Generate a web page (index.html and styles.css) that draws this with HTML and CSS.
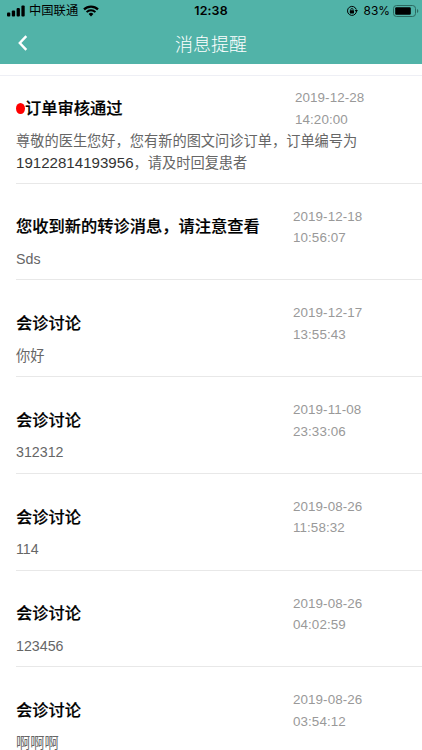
FILE: index.html
```
<!DOCTYPE html>
<html lang="zh-CN">
<head>
    <meta charset="UTF-8">
    <meta name="viewport" content="width=device-width, initial-scale=1.0">
    <title>消息提醒</title>
    <link rel="stylesheet" href="styles.css">
</head>
<body>

    <div class="header">
        <!-- 状态栏 -->
        <div class="status-bar">
            <div class="status-left">
                <svg class="signal" width="18" height="12" viewBox="0 0 18 12">
                    <rect x="0" y="7.5" width="3.3" height="4" rx="1"/>
                    <rect x="4.8" y="5.5" width="3.3" height="6" rx="1"/>
                    <rect x="9.6" y="3" width="3.3" height="8.5" rx="1"/>
                    <rect x="14.4" y="0.5" width="3.3" height="11" rx="1"/>
                </svg>
                <span class="carrier">中国联通</span>
                <svg class="wifi" width="16" height="12" viewBox="0 0 16 12">
                    <path d="M1 4.4a10 10 0 0 1 14 0" fill="none" stroke="#000" stroke-width="2.2"/>
                    <path d="M3.6 7.1a6.2 6.2 0 0 1 8.8 0" fill="none" stroke="#000" stroke-width="2"/>
                    <path d="M8 11.4L5.6 9a3.4 3.4 0 0 1 4.8 0z"/>
                </svg>
            </div>
            <div class="status-time">12:38</div>
            <div class="status-right">
                <svg class="lock" width="12" height="12" viewBox="0 0 12 12">
                    <path d="M10.3 7.2a4.5 4.5 0 1 1 0-2.6" fill="none" stroke="#000" stroke-width="1"/>
                    <path d="M8.7 5h3.2L10.4 7.4z"/>
                    <rect x="3.8" y="5.3" width="4.2" height="3.2" rx="0.4"/>
                    <path d="M4.7 5.5V4.7a1.2 1.2 0 0 1 2.4 0v.8" fill="none" stroke="#000" stroke-width="0.8"/>
                </svg>
                <span class="percent">83%</span>
                <svg class="battery" width="26" height="12" viewBox="0 0 26 12">
                    <rect x="0.5" y="0.5" width="22" height="11" rx="3" fill="none" stroke="#2b6960" stroke-width="1"/>
                    <rect x="2.2" y="2.2" width="15.6" height="7.6" rx="1.2"/>
                    <path d="M24 4v4q1.3-.6 1.3-2T24 4z" fill="#2b6960"/>
                </svg>
            </div>
        </div>

        <!-- 导航栏 -->
        <div class="nav-bar">
            <svg class="back" width="10" height="16" viewBox="0 0 10 16">
                <path d="M8.3 1.2L1.8 8l6.5 6.8" fill="none" stroke="#fff" stroke-width="2.4"/>
            </svg>
            <div class="nav-title">消息提醒</div>
        </div>
    </div>

    <!-- 消息列表 -->
    <div class="list">
        <div class="item unread">
            <div class="item-head">
                <div class="title"><span class="dot"></span>订单审核通过</div>
                <div class="date">2019-12-28<br>14:20:00</div>
            </div>
            <div class="desc">尊敬的医生您好，您有新的图文问诊订单，订单编号为<br><span class="order">19122814193956</span>，请及时回复患者</div>
        </div>
        <div class="item">
            <div class="item-head">
                <div class="title">您收到新的转诊消息，请注意查看</div>
                <div class="date">2019-12-18<br>10:56:07</div>
            </div>
            <div class="desc">Sds</div>
        </div>
        <div class="item">
            <div class="item-head">
                <div class="title">会诊讨论</div>
                <div class="date">2019-12-17<br>13:55:43</div>
            </div>
            <div class="desc">你好</div>
        </div>
        <div class="item">
            <div class="item-head">
                <div class="title">会诊讨论</div>
                <div class="date">2019-11-08<br>23:33:06</div>
            </div>
            <div class="desc">312312</div>
        </div>
        <div class="item">
            <div class="item-head">
                <div class="title">会诊讨论</div>
                <div class="date">2019-08-26<br>11:58:32</div>
            </div>
            <div class="desc">114</div>
        </div>
        <div class="item">
            <div class="item-head">
                <div class="title">会诊讨论</div>
                <div class="date">2019-08-26<br>04:02:59</div>
            </div>
            <div class="desc">123456</div>
        </div>
        <div class="item">
            <div class="item-head">
                <div class="title">会诊讨论</div>
                <div class="date">2019-08-26<br>03:54:12</div>
            </div>
            <div class="desc">啊啊啊</div>
        </div>
    </div>

</body>
</html>
```
FILE: styles.css
```
* {
    box-sizing: border-box;
}
body {
    margin: 0;
    height: 750px;
    overflow: hidden;
    background: #fff;
    font-family: "Liberation Sans", "Noto Sans CJK SC", sans-serif;
}
svg {
    display: block;
    flex-shrink: 0;
}
.header {
    height: 64px;
    background: #51b3a8;
}
.status-bar {
    display: grid;
    grid-template-columns: 1fr auto 1fr;
    align-items: center;
    height: 22px;
    padding: 0 1px 0 7px;
    color: #000;
    font-size: 12.3px;
    line-height: 22px;
}
.status-left, .status-right {
    display: flex;
    align-items: center;
}
.carrier {
    margin: 0 5px 0 4px;
}
.status-time {
    font-family: Inter, sans-serif;
    font-weight: 600;
    font-size: 12.4px;
    letter-spacing: 0.15px;
    margin-right: 6px;
}
.status-right {
    justify-content: flex-end;
    font-family: Inter, sans-serif;
}
.percent {
    margin: 0 3px 0 6px;
    font-size: 11.9px;
}
.battery {
    margin-right: 2px;
}
.nav-bar {
    display: grid;
    grid-template-columns: 30px 1fr 30px;
    align-items: center;
    height: 42px;
    padding: 0 18px;
}
.nav-title {
    text-align: center;
    color: #fff;
    font-family: "Noto Sans CJK SC", sans-serif;
    font-weight: 200;
    font-size: 18px;
    line-height: 42px;
}
.list {
    margin-top: 11px;
    border-top: 1px solid #eeeff5;
}
.item {
    height: 96.8px;
    margin-left: 16px;
    padding-top: 22px;
    border-bottom: 1px solid #e8e8e8;
}
.item.unread {
    height: 107.5px;
    padding-top: 11px;
}
.item-head {
    display: flex;
    align-items: center;
    height: 43px;
}
.title {
    display: flex;
    align-items: center;
    width: 277px;
    padding-bottom: 3.5px;
    color: #000;
    font-size: 16.25px;
    font-weight: 500;
    -webkit-text-stroke: 0.2px #000;
    white-space: nowrap;
}
.unread .title {
    width: 279px;
}
.dot {
    width: 9px;
    height: 11px;
    margin-top: 3px;
    border-radius: 50%;
    background: #f00;
}
.date {
    color: #999;
    font-size: 13.4px;
    line-height: 21.5px;
    letter-spacing: 0.08px;
}
.desc {
    color: #666;
    font-size: 14.22px;
    line-height: 21.5px;
    padding-top: 0.3px;
    white-space: nowrap;
}
.unread .desc {
    padding-top: 1px;
}
.order {
    color: #333;
    font-size: 15.1px;
    line-height: 1;
}
```
